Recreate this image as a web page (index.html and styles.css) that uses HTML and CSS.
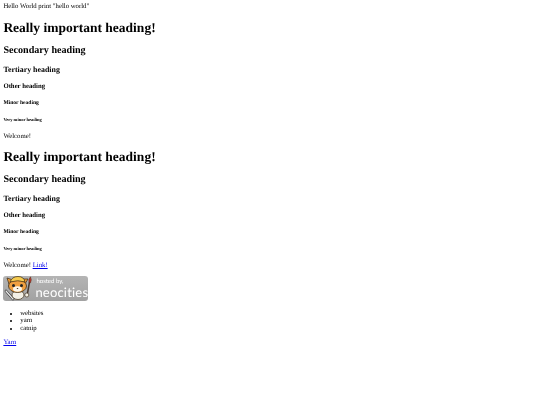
FILE: index.html
```html
<!DOCTYPE html>
<html lang="en">
<head>
  <meta charset="UTF-8">
  <title>Hello World</title>
  <link rel="stylesheet" href="styles.css">
</head>
<body>
  Hello World print "hello world"
  <h1>Really important heading!</h1>
  <h2>Secondary heading</h2>
  <h3>Tertiary heading</h3>
  <h4>Other heading</h4>
  <h5>Minor heading</h5>
  <h6>Very minor heading</h6>
  <p>Welcome!</p>
  <h1>Really important heading!</h1>
  <h2>Secondary heading</h2>
  <h3>Tertiary heading</h3>
  <h4>Other heading</h4>
  <h5>Minor heading</h5>
  <h6>Very minor heading</h6>
  <p>Welcome! <a href="#">Link!</a></p>
  <a href="#" class="badge">
    <svg class="cat" width="32" height="25" viewBox="0 0 32 25">
      <!-- wrench -->
      <path d="M3 15 L10 23" stroke="#2a2a2a" stroke-width="2.6" stroke-linecap="round"/>
      <path d="M3 15 L10 23" stroke="#e8e8e8" stroke-width="1.4" stroke-linecap="round"/>
      <!-- body -->
      <ellipse cx="15" cy="19" rx="6" ry="4.5" fill="#f3f0e6" stroke="#3a2a14" stroke-width=".7"/>
      <!-- ears -->
      <path d="M6 8 L4 2 L10 4 Z" fill="#ee9a35" stroke="#3a2a14" stroke-width=".7"/>
      <path d="M22 8 L25 3 L18 3 Z" fill="#ee9a35" stroke="#3a2a14" stroke-width=".7"/>
      <!-- head -->
      <ellipse cx="14.5" cy="10" rx="9" ry="6.5" fill="#f0a040" stroke="#3a2a14" stroke-width=".8"/>
      <!-- hard hat -->
      <path d="M7 6 Q9 .5 15 .5 Q21 .5 22 6 Q15 3.5 7 6 Z" fill="#f6cc50" stroke="#3a2a14" stroke-width=".7"/>
      <!-- muzzle and eyes -->
      <ellipse cx="14.5" cy="13" rx="4.5" ry="2.8" fill="#fbf6ea"/>
      <circle cx="10.5" cy="9.5" r="1.5" fill="#222"/>
      <circle cx="18.5" cy="9.5" r="1.5" fill="#222"/>
      <path d="M13.5 12 L15.5 12 L14.5 13.2 Z" fill="#3a2a14"/>
      <!-- paintbrush -->
      <path d="M26.5 6 L24 20" stroke="#4a3a30" stroke-width="1.5" stroke-linecap="round"/>
      <path d="M27.5 .8 Q25.2 3 26 6.5 L27.6 6.8 Q29 3.5 27.5 .8 Z" fill="#b9372c" stroke="#3a2a14" stroke-width=".4"/>
      <circle cx="23.8" cy="19" r="2" fill="#f3f0e6" stroke="#3a2a14" stroke-width=".6"/>
    </svg>
    <span class="badge-text"><small>hosted by,</small>neocities</span>
  </a>
  <ul>
    <li>websites</li>
    <li>yarn</li>
    <li>catnip</li>
  </ul>
  <p><a href="#">Yarn</a></p>
</body>
</html>
```

FILE: styles.css
```css
body {
  margin: 3.375px;
  font-family: "Liberation Serif", serif;
  font-size: 6.75px;
  line-height: 7.59px;
  text-rendering: geometricPrecision;
  filter: blur(0.2px);
}

h1 { font-size: 13.5px; line-height: 15.6px; margin: 9.05px 0; }
h2 { font-size: 10.125px; line-height: 11.8px; margin: 8.4px 0; }
h3 { font-size: 7.9px; line-height: 9.28px; margin: 7.9px 0; }
h4 { font-size: 6.75px; line-height: 7.59px; margin: 8.98px 0; }
h5 { font-size: 5.6px; line-height: 6.33px; margin: 9.36px 0; }
h6 { font-size: 4.52px; line-height: 5.06px; margin: 10.54px 0; }

p { margin: 6.75px 0; }

ul {
  margin: 6.75px 0;
  padding-left: 16.875px;
}

.badge {
  display: flex;
  width: 84.4px;
  height: 25.3px;
  margin-bottom: 8.25px;
  background: linear-gradient(#b4b4b4, #a2a2a2);
  border-radius: 3px;
  color: #fff;
  text-decoration: none;
}

.cat {
  flex: none;
}

.badge-text {
  display: flex;
  flex-direction: column;
  padding-top: 1.6px;
  font-family: "Lato", sans-serif;
  font-size: 13px;
  line-height: 15.6px;
  letter-spacing: 0.2px;
}

.badge-text small {
  margin-left: 1px;
  font-size: 6px;
  line-height: 7.2px;
  letter-spacing: 0;
}
```
